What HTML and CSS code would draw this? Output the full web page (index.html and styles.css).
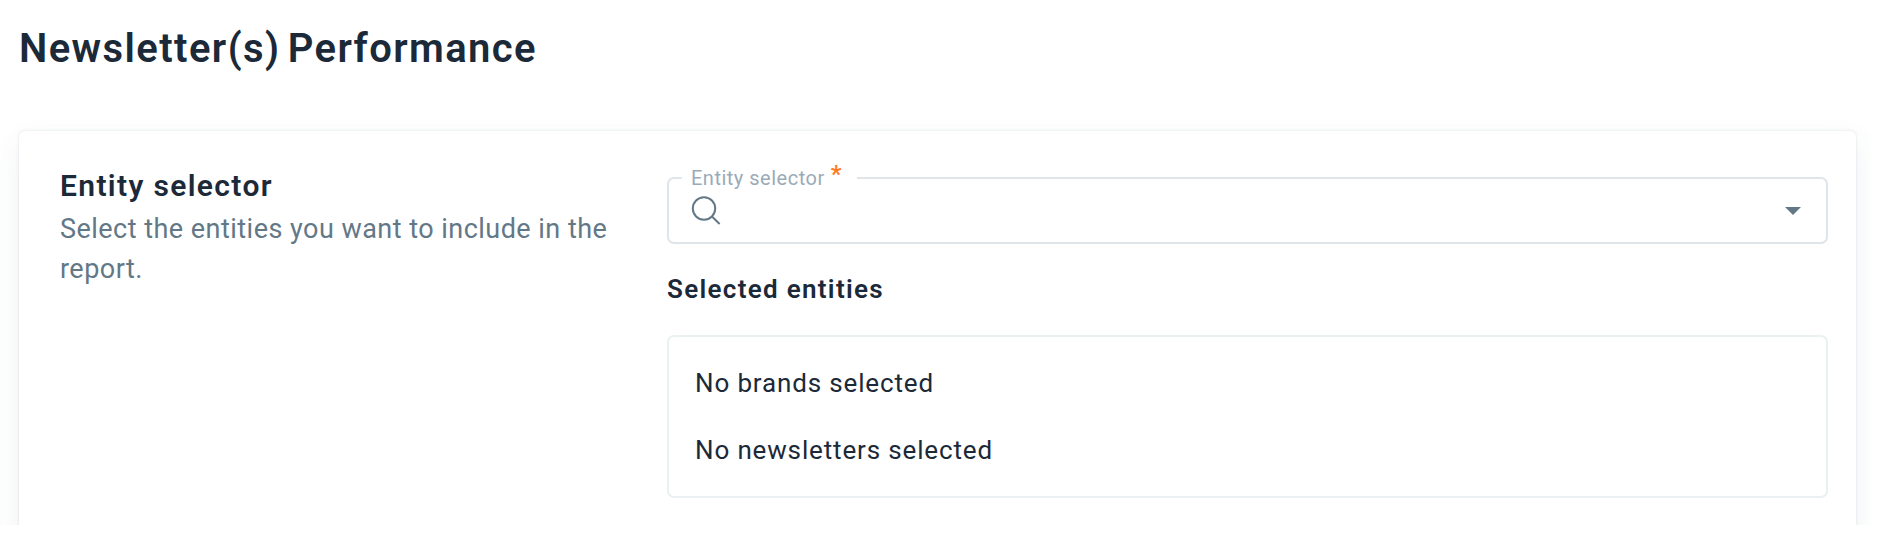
FILE: index.html
```html
<!DOCTYPE html>
<html lang="en">
    <head>
        <meta charset="utf-8">
        <title>Newsletter(s) Performance</title>
        <link rel="stylesheet" href="styles.css">
    </head>
    <body>
        <div class="page">
            <h1>Newsletter(s) Performance</h1>
            <div class="card">
                <div class="intro">
                    <h2>Entity selector</h2>
                    <p>Select the entities you want to include in the report.</p>
                </div>
                <div class="content">
                    <!--Search field with the label over its border-->
                    <fieldset class="field">
                        <legend><span class="labelText">Entity selector</span><span class="required">*</span></legend>
                        <div class="fieldRow">
                            <svg class="search" width="30" height="30" viewBox="0 0 30 30">
                                <circle cx="13" cy="12.5" r="11.2"/>
                                <path d="M21 20.5 L28.6 28"/>
                            </svg>
                            <svg class="arrow" width="16" height="8" viewBox="0 0 16 8">
                                <path d="M0 0 H16 L8 8 Z"/>
                            </svg>
                        </div>
                    </fieldset>
                    <h3>Selected entities</h3>
                    <div class="selected">
                        <p class="brands">No brands selected</p>
                        <p class="newsletters">No newsletters selected</p>
                    </div>
                </div>
            </div>
        </div>
    </body>
</html>
```
FILE: styles.css
```css
*
{
    box-sizing: border-box;
}
body
{
    margin: 0;
    background-color: white;
    overflow: hidden;
    font-family: Roboto, "Liberation Sans", sans-serif;
    font-size: 26px;
    color: #1b2938;
}
h1, h2, h3, p
{
    margin: 0;
    font-weight: 600;
    white-space: nowrap;
}
.page
{
    width: 1871px;
    height: 525px;
    padding: 25px 15px 0 19px;
    overflow: hidden;
}
h1
{
    font-size: 40px;
    line-height: 48px;
    letter-spacing: 1.4px;
    word-spacing: -4px;
}
.card
{
    display: flex;
    height: 600px;
    margin-top: 58px;
    padding: 36px 28px 0 41px;
    border-radius: 6px;
    background-color: white;
    box-shadow: 0 0 3px rgba(60, 90, 115, 0.16), 0 12px 30px rgba(60, 90, 115, 0.08);
}
.intro
{
    width: 607px;
    padding-top: 1px;
}
h2
{
    font-size: 30px;
    line-height: 36px;
    letter-spacing: 1.35px;
}
.intro p
{
    width: 560px;
    margin-top: 5px;
    line-height: 40px;
    font-size: 27px;
    font-weight: 400;
    letter-spacing: 0.47px;
    color: #637887;
    white-space: normal;
}
.content
{
    flex: 1;
}
.field
{
    height: 77px;
    margin: 0;
    padding: 0 25px 0 22px;
    border: 2px solid #dfe5e9;
    border-radius: 7px;
}
legend
{
    display: flex;
    height: 22px;
    margin-left: -9px;
    padding: 0 16px 0 9px;
    font-size: 20px;
    line-height: 22px;
    color: #9aabb7;
}
.labelText
{
    letter-spacing: 0.5px;
}
.required
{
    margin-left: 6px;
    color: #ff7a1a;
    font-size: 24px;
    font-weight: 600;
    line-height: 14px;
}
.fieldRow
{
    display: flex;
    align-items: center;
    justify-content: space-between;
    height: 43px;
}
.search
{
    fill: none;
    stroke: #637887;
    stroke-width: 2;
}
.arrow
{
    margin-top: 1px;
    fill: #637887;
}
h3
{
    margin-top: 29px;
    font-size: 26px;
    line-height: 32px;
    letter-spacing: 1.3px;
}
.selected
{
    height: 163px;
    margin-top: 30px;
    padding: 30px 26px;
    border: 2px solid #ebf0f3;
    border-radius: 7px;
}
.selected p
{
    font-weight: 400;
    line-height: 32px;
    letter-spacing: 0.85px;
}
.newsletters
{
    padding-top: 35px;
}
```
